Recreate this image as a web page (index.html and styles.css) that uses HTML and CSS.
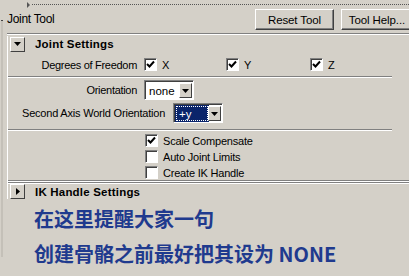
FILE: index.html
```html
<!DOCTYPE html>
<html>
<head>
<meta charset="utf-8">
<link rel="stylesheet" href="styles.css">
</head>
<body>
<div class="page">
  <div class="edge"><div class="edge-line"></div></div>
  <div class="main">
    <div class="topline"><span class="tri"></span><span class="dots"></span></div>
    <div class="header">
      <span class="title">Joint Tool</span>
      <div class="buttons">
        <button class="btn reset">Reset Tool</button>
        <button class="btn help">Tool Help...</button>
      </div>
    </div>
    <div class="frame">
      <div class="sec-head">
        <span class="arrow-btn"><svg width="7" height="4" viewBox="0 0 7 4"><path d="M0 0H7L3.5 4Z" fill="#000"/></svg></span>
        <span class="sec-title">Joint Settings</span>
      </div>
      <div class="panel">
        <div class="row dof">
          <span class="label">Degrees of Freedom</span>
          <span class="check-item x"><span class="cb checked"><svg width="9" height="9" viewBox="0 0 9 9"><path d="M1 4L3.5 6.5L8 1.5" fill="none" stroke="#000" stroke-width="2"/></svg></span>X</span>
          <span class="check-item y"><span class="cb checked"><svg width="9" height="9" viewBox="0 0 9 9"><path d="M1 4L3.5 6.5L8 1.5" fill="none" stroke="#000" stroke-width="2"/></svg></span>Y</span>
          <span class="check-item z"><span class="cb checked"><svg width="9" height="9" viewBox="0 0 9 9"><path d="M1 4L3.5 6.5L8 1.5" fill="none" stroke="#000" stroke-width="2"/></svg></span>Z</span>
        </div>
        <div class="sep"></div>
        <div class="row orient">
          <span class="label">Orientation</span>
          <span class="combo"><span class="field">none</span><span class="drop"><svg width="7" height="4" viewBox="0 0 7 4"><path d="M0 0H7L3.5 4Z" fill="#000"/></svg></span></span>
        </div>
        <div class="row second">
          <span class="label2">Second Axis World Orientation</span>
          <span class="combo"><span class="field sel"><span class="focus">+y</span></span><span class="drop"><svg width="7" height="4" viewBox="0 0 7 4"><path d="M0 0H7L3.5 4Z" fill="#000"/></svg></span></span>
        </div>
        <div class="sep sep2"></div>
        <div class="checks">
          <span class="check-item"><span class="cb checked"><svg width="9" height="9" viewBox="0 0 9 9"><path d="M1 4L3.5 6.5L8 1.5" fill="none" stroke="#000" stroke-width="2"/></svg></span>Scale Compensate</span>
          <span class="check-item"><span class="cb"></span>Auto Joint Limits</span>
          <span class="check-item"><span class="cb"></span>Create IK Handle</span>
        </div>
      </div>
      <div class="double-sep"></div>
      <div class="sec-head ik">
        <span class="arrow-btn"><svg width="4" height="7" viewBox="0 0 4 7"><path d="M0 0V7L4 3.5Z" fill="#000"/></svg></span>
        <span class="sec-title">IK Handle Settings</span>
      </div>
    </div>
    <div class="note">
      <p>在这里提醒大家一句</p>
      <p>创建骨骼之前最好把其设为 NONE</p>
    </div>
  </div>
</div>
</body>
</html>
```

FILE: styles.css
```css
html, body {
  margin: 0;
  padding: 0;
  background: #d4d0c8;
  width: 409px;
  height: 276px;
  overflow: hidden;
}
body {
  font-family: "Liberation Sans", Arial, sans-serif;
  font-size: 11px;
  color: #000;
}
.page {
  display: flex;
  height: 276px;
  overflow: hidden;
}
.edge {
  width: 7px;
  flex: none;
  display: flex;
  padding-top: 20px;
  box-sizing: border-box;
}
.edge-line {
  width: 2px;
  margin-left: 1px;
  height: 236px;
  background: #c4c0b8;
  border-top: 1px solid #444;
}
.main {
  flex: 1;
  display: flex;
  flex-direction: column;
  min-width: 0;
}
.main > *,
.frame > *,
.panel > * {
  flex-shrink: 0;
}
.topline {
  height: 9px;
  display: flex;
  align-items: center;
  padding-left: 20px;
}
.tri {
  width: 0;
  height: 0;
  border-left: 3px solid #555;
  border-top: 3px solid transparent;
  border-bottom: 3px solid transparent;
  margin-right: 2px;
}
.dots {
  flex: 1;
  border-top: 1px dotted #555;
}
.header {
  display: flex;
  justify-content: space-between;
  align-items: flex-start;
  height: 24px;
  border-bottom: 1px solid #808080;
  box-shadow: 0 1px 0 #fff;
  margin-bottom: 2px;
}
.title {
  font-size: 12px;
  margin-top: 3px;
  letter-spacing: -0.3px;
}
.buttons {
  display: flex;
  gap: 7px;
  margin-right: -4px;
}
.btn {
  font-family: "Liberation Sans", Arial, sans-serif;
  font-size: 11.5px;
  height: 21px;
  background: #d4d0c8;
  border: 1px solid;
  border-color: #fff #404040 #404040 #fff;
  box-shadow: inset -1px -1px 0 #808080;
  padding: 0;
  color: #000;
  letter-spacing: -0.1px;
}
.reset { width: 79px; }
.help { width: 72px; }
.frame {
  display: flex;
  flex-direction: column;
  border-left: 1px solid #fff;
}
.sec-head {
  display: flex;
  align-items: center;
  height: 16px;
  padding-left: 2px;
}
.ik {
  height: 15px;
}
.arrow-btn {
  width: 13px;
  height: 13px;
  background: #d4d0c8;
  border: 1px solid;
  border-color: #fff #404040 #404040 #fff;
  display: flex;
  align-items: center;
  justify-content: center;
  margin-right: 10px;
}
.sec-title {
  font-weight: bold;
  font-size: 11.5px;
  letter-spacing: 0.2px;
}
.panel {
  display: flex;
  flex-direction: column;
  padding-top: 4px;
}
.row {
  display: flex;
  align-items: center;
  white-space: nowrap;
}
.label {
  width: 129px;
  text-align: right;
  padding-right: 7px;
  font-size: 11px;
  letter-spacing: -0.3px;
}
.dof {
  height: 17px;
}
.check-item {
  display: flex;
  align-items: center;
  font-size: 11px;
  letter-spacing: -0.2px;
  white-space: nowrap;
}
.cb {
  width: 11px;
  height: 11px;
  background: #fff;
  border: 1px solid;
  border-color: #808080 #fff #fff #808080;
  box-shadow: inset 1px 1px 0 #404040;
  display: flex;
  align-items: center;
  justify-content: center;
  margin-right: 5px;
  flex: none;
}
.dof .x { width: 82px; }
.dof .y { width: 84px; }
.sep {
  height: 0;
  border-top: 1px solid #808080;
  border-bottom: 1px solid #fff;
  margin: 3px 17px 2px 0;
}
.orient {
  height: 20px;
}
.combo {
  display: flex;
  height: 20px;
  box-sizing: border-box;
  border: 1px solid;
  border-color: #808080 #fff #fff #808080;
  box-shadow: inset 1px 1px 0 #404040;
  background: #fff;
  padding: 2px 1px 1px 2px;
}
.orient .combo { width: 50px; }
.field {
  flex: 1;
  font-size: 11.5px;
  display: flex;
  align-items: center;
  padding-left: 2px;
}
.field.sel {
  padding: 0;
}
.focus {
  flex: 1;
  height: 100%;
  box-sizing: border-box;
  background: #0a246a;
  color: #fff;
  border: 1px dotted #fff;
  display: flex;
  align-items: center;
  padding-left: 2px;
  outline: 1px solid #0a246a;
}
.drop {
  width: 13px;
  height: 15px;
  box-sizing: border-box;
  background: #d4d0c8;
  border: 1px solid;
  border-color: #fff #404040 #404040 #fff;
  display: flex;
  align-items: center;
  justify-content: center;
}
.second {
  height: 20px;
  margin-top: 3px;
}
.label2 {
  font-size: 11px;
  letter-spacing: -0.2px;
  margin-left: 14px;
  width: 151px;
}
.second .combo {
  width: 50px;
}
.sep2 {
  margin-top: 6px;
  margin-bottom: 3px;
}
.checks {
  display: flex;
  flex-direction: column;
  padding-left: 137px;
  gap: 3px;
}
.checks .check-item {
  height: 13px;
}
.double-sep {
  margin-top: 1px;
  margin-right: 0;
  height: 4px;
  background: linear-gradient(#808080 0 1px, #fff 1px 2px, #808080 2px 3px, #fff 3px 4px);
}
.note {
  padding-left: 27px;
  padding-top: 2px;
  font-family: "Noto Sans CJK SC", "Liberation Sans", sans-serif;
  font-weight: bold;
  font-size: 20px;
  color: #1f3a8e;
}
.note p {
  margin: 0;
  line-height: 35px;
}
```
